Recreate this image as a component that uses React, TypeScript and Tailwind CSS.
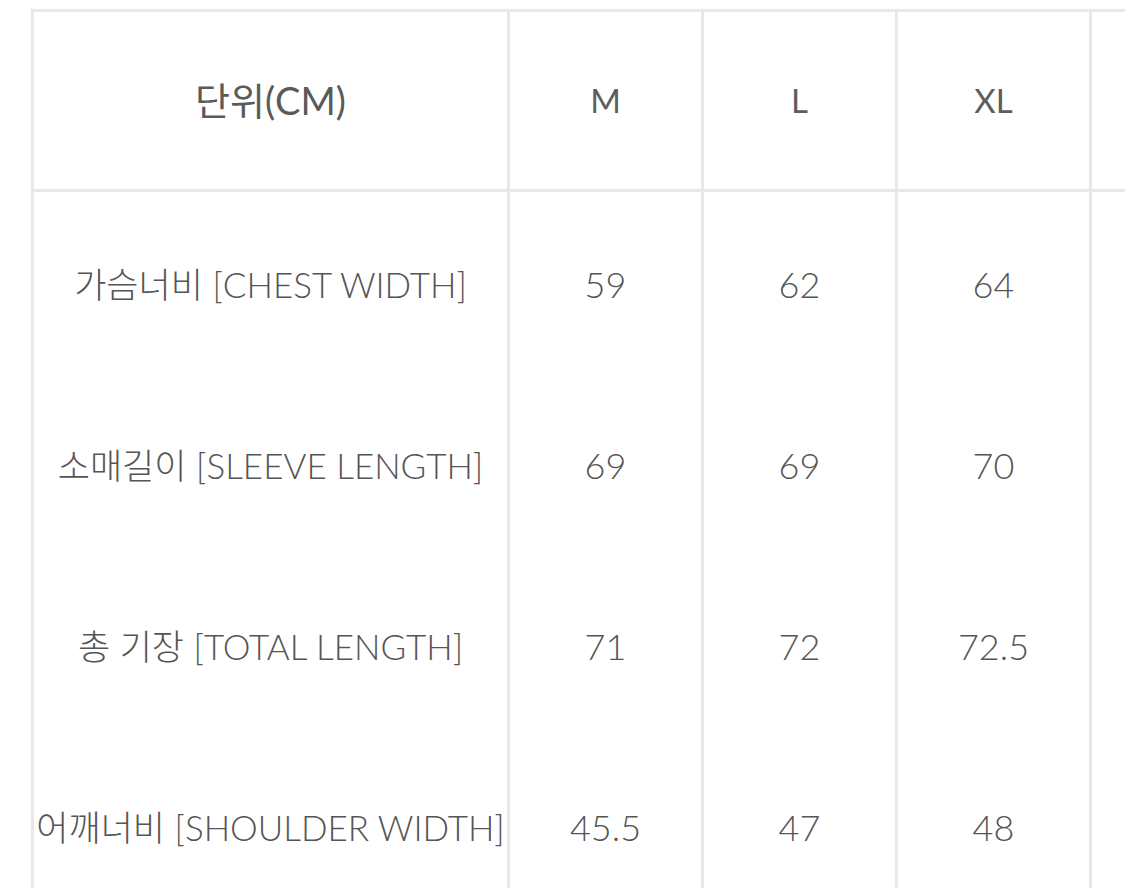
import React from "react";

const sizes = ["M", "L", "XL", ""];

const rows = [
  { label: "가슴너비 [CHEST WIDTH]", values: ["59", "62", "64", ""] },
  { label: "소매길이 [SLEEVE LENGTH]", values: ["69", "69", "70", ""] },
  { label: "총 기장 [TOTAL LENGTH]", values: ["71", "72", "72.5", ""] },
  { label: "어깨너비 [SHOULDER WIDTH]", values: ["45.5", "47", "48", ""] },
];

const font = "font-['Lato','Noto_Sans_CJK_KR',sans-serif]";

export default function App() {
  return (
    <div className={`w-[1125px] h-[888px] overflow-hidden bg-white pl-[31px] pt-[9px] ${font}`}>
      <div className="w-[1300px] border-l-[3px] border-t-[3px] border-[#e8e8e8]">
        {/* header */}
        <div className="grid grid-cols-[476px_194px_194px_194px_194px] h-[180px] border-b-[3px] border-[#e8e8e8]">
          <div className="flex items-center justify-center border-r-[3px] border-[#e8e8e8] text-[38px] text-[#5a5a5a]">
            단위(CM)
          </div>
          {sizes.map((s, i) => (
            <div
              key={i}
              className="flex items-center justify-center border-r-[3px] border-[#e8e8e8] text-[33px] text-[#5e5e5e]"
            >
              {s}
            </div>
          ))}
        </div>

        {/* body */}
        {rows.map((r) => (
          <div key={r.label} className="grid grid-cols-[476px_194px_194px_194px_194px] h-[181px]">
            <div className="flex items-center justify-center whitespace-nowrap border-r-[3px] border-[#e8e8e8] pt-[3px] text-[35px] font-light text-[#555555]">
              {r.label}
            </div>
            {r.values.map((v, i) => (
              <div
                key={i}
                className="flex items-center justify-center border-r-[3px] border-[#e8e8e8] pt-[3px] text-[36px] font-light text-[#555555]"
              >
                {v}
              </div>
            ))}
          </div>
        ))}
      </div>
    </div>
  );
}
